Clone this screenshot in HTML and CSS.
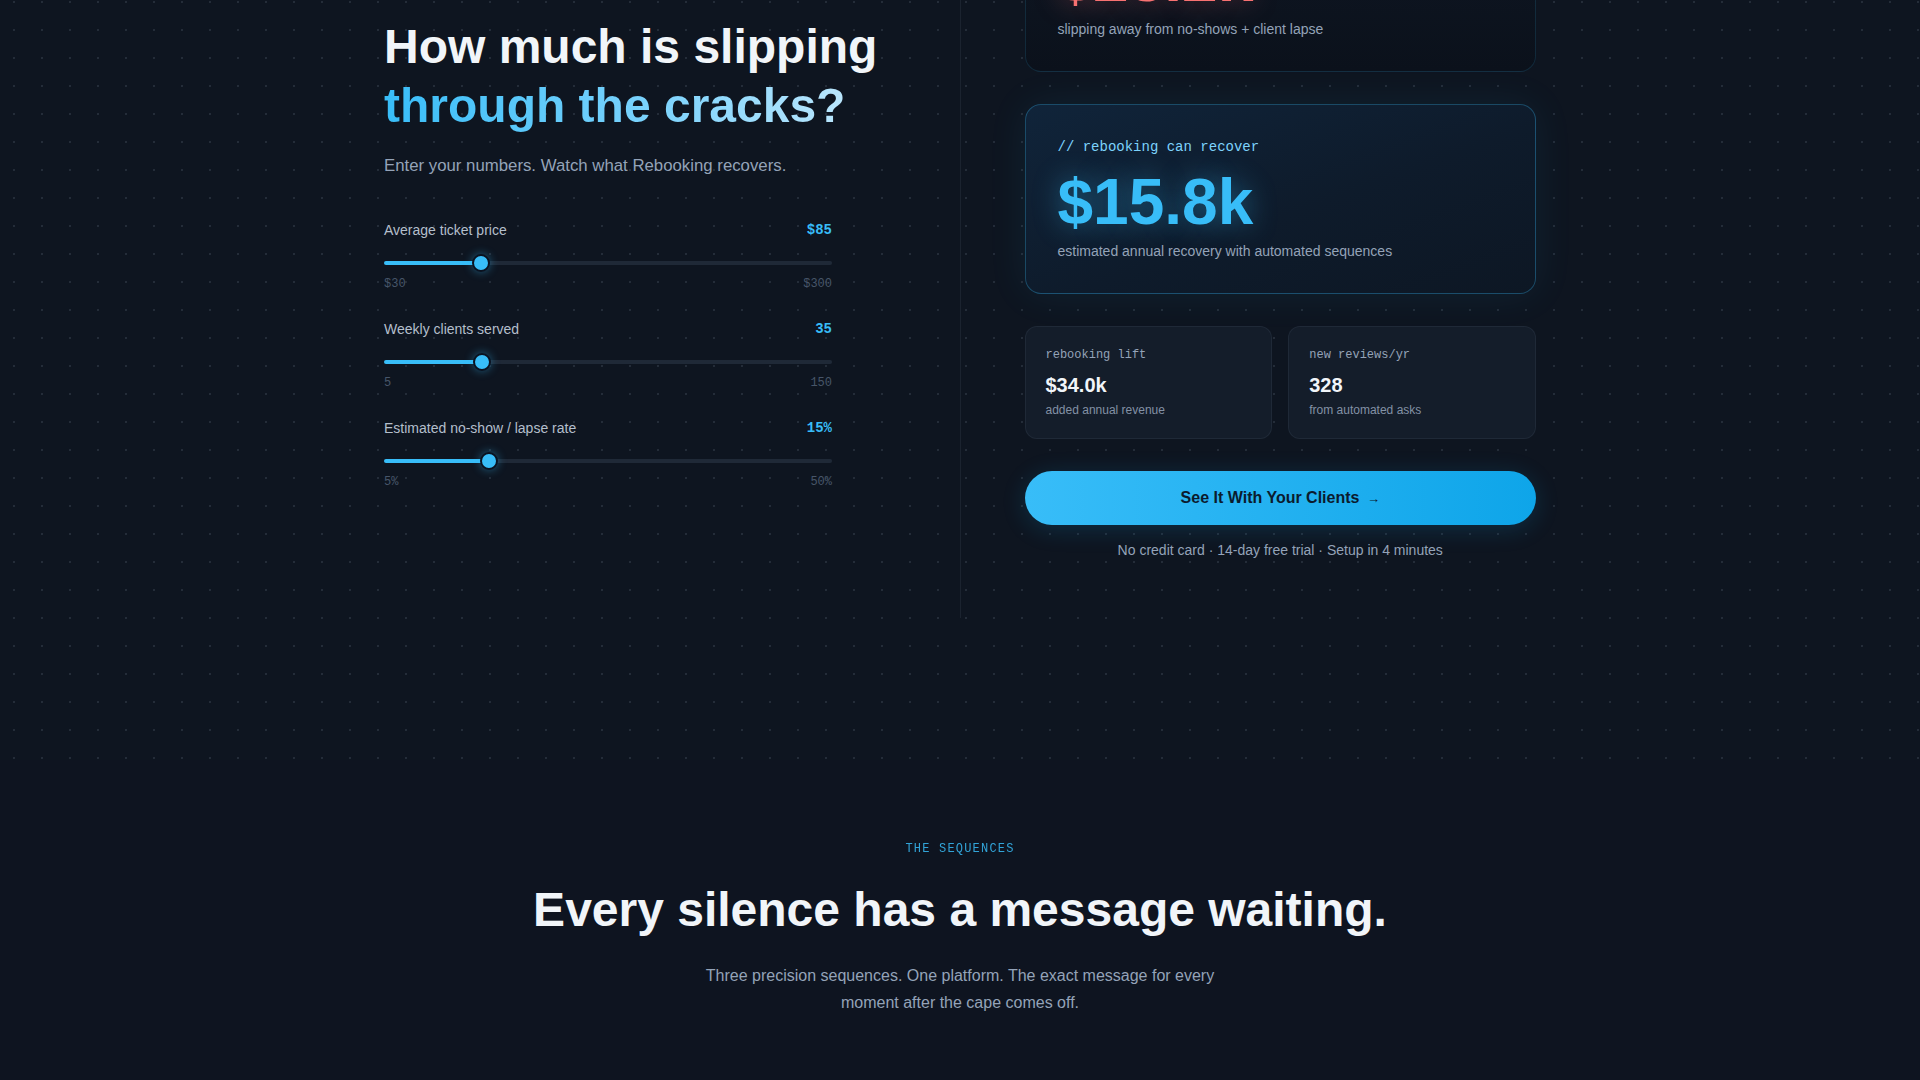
FILE: index.html
```html
<!DOCTYPE html>
<html lang="en">
<head>
  <meta charset="UTF-8">
  <title>Rebooking — ROI calculator</title>
  <meta name="viewport" content="width=device-width, initial-scale=1.0">
  <link rel="stylesheet" href="styles.css">
</head>
<body>
  <section class="calc">
    <div class="calc-grid">
      <div class="calc-left">
        <h2 class="calc-title">How much is slipping<br><span class="grad">through the cracks?</span></h2>
        <p class="calc-sub">Enter your numbers. Watch what Rebooking recovers.</p>
        <div class="sliders">
          <div class="slider">
            <div class="slider-head"><label for="ticket">Average ticket price</label><span class="slider-val">$85</span></div>
            <input class="range" type="range" id="ticket" min="30" max="300" value="85" style="--fill:21.6%">
            <div class="slider-ends"><span>$30</span><span>$300</span></div>
          </div>
          <div class="slider">
            <div class="slider-head"><label for="clients">Weekly clients served</label><span class="slider-val">35</span></div>
            <input class="range" type="range" id="clients" min="5" max="150" value="35" style="--fill:21.9%">
            <div class="slider-ends"><span>5</span><span>150</span></div>
          </div>
          <div class="slider">
            <div class="slider-head"><label for="lapse">Estimated no-show / lapse rate</label><span class="slider-val">15%</span></div>
            <input class="range" type="range" id="lapse" min="5" max="50" value="15" style="--fill:23.3%">
            <div class="slider-ends"><span>5%</span><span>50%</span></div>
          </div>
        </div>
      </div>
      <div class="calc-divider"></div>
      <div class="calc-right">
        <div class="big-card loss">
          <div class="card-tag">// you're losing every year</div>
          <div class="big-num">$23.2k</div>
          <div class="card-note">slipping away from no-shows + client lapse</div>
        </div>
        <div class="big-card win">
          <div class="card-tag">// rebooking can recover</div>
          <div class="big-num">$15.8k</div>
          <div class="card-note">estimated annual recovery with automated sequences</div>
        </div>
        <div class="mini-cards">
          <div class="mini-card">
            <div class="mini-tag">rebooking lift</div>
            <div class="mini-num">$34.0k</div>
            <div class="mini-note">added annual revenue</div>
          </div>
          <div class="mini-card">
            <div class="mini-tag">new reviews/yr</div>
            <div class="mini-num">328</div>
            <div class="mini-note">from automated asks</div>
          </div>
        </div>
        <button class="cta" type="button">See It With Your Clients <span class="arrow">→</span></button>
        <p class="cta-note">No credit card · 14-day free trial · Setup in 4 minutes</p>
      </div>
    </div>
  </section>

  <section class="seq">
    <div class="eyebrow">THE SEQUENCES</div>
    <h2 class="seq-title">Every silence has a message waiting.</h2>
    <p class="seq-sub">Three precision sequences. One platform. The exact message for every moment after the cape comes off.</p>
  </section>
</body>
</html>
```

FILE: styles.css
```css
html, body {
  margin: 0; padding: 0;
  background: #0e1420;
  font-family: "Liberation Sans", Arial, sans-serif;
  color: #f1f5f9;
  overflow-x: hidden;
}
* { box-sizing: border-box; }

/* calculator block, dotted backdrop */
.calc {
  margin-top: -119px;
  padding-bottom: 142px;
  background-color: #0e1520;
  background-image: radial-gradient(circle, rgba(148,163,184,0.16) 1px, transparent 1.5px);
  background-size: 28px 28px;
  background-position: 0 23px;
}
.calc-grid {
  max-width: 1152px;
  margin: 0 auto;
  display: grid;
  grid-template-columns: 1fr 1px 1fr;
  gap: 64px;
}
.calc-left { padding-top: 137px; }
.calc-divider { background: rgba(148,163,184,0.1); }
.calc-right { padding-bottom: 58px; }

.calc-title {
  margin: 0;
  font-size: 48px;
  line-height: 1.22;
  font-weight: 700;
  color: #f1f5f9;
}
.grad {
  background: linear-gradient(90deg, #38bdf8 0%, #7dd3fc 60%, #bae6fd 100%);
  -webkit-background-clip: text;
  background-clip: text;
  color: transparent;
}
.calc-sub {
  margin: 17px 0 0;
  font-size: 16.8px;
  line-height: 27px;
  color: #94a3b8;
}

/* sliders */
.sliders { max-width: 448px; margin-top: 41px; }
.slider + .slider { margin-top: 27px; }
.slider-head {
  display: flex; justify-content: space-between; align-items: center;
  height: 20px;
  font-size: 14px;
  color: #b4bfcc;
}
.slider-val {
  font-family: "Liberation Mono", "DejaVu Sans Mono", monospace;
  font-weight: 700;
  color: #38bdf8;
}
.range {
  -webkit-appearance: none;
  appearance: none;
  display: block;
  width: 100%;
  height: 18px;
  margin: 14px 0 0;
  background: transparent;
  outline: none;
}
.range::-webkit-slider-runnable-track {
  height: 4px;
  border-radius: 2px;
  background: linear-gradient(90deg, #38bdf8 0, #38bdf8 var(--fill), #1f2937 var(--fill));
}
.range::-webkit-slider-thumb {
  -webkit-appearance: none;
  width: 18px; height: 18px;
  margin-top: -7px;
  border-radius: 50%;
  background: #38bdf8;
  border: 2px solid #0b1220;
  box-shadow: 0 0 10px rgba(56,189,248,0.45);
}
.slider-ends {
  display: flex; justify-content: space-between;
  margin-top: 4px;
  font-family: "Liberation Mono", "DejaVu Sans Mono", monospace;
  font-size: 12px;
  line-height: 16px;
  color: #475569;
}

/* result cards */
.big-card {
  border-radius: 16px;
  padding: 32px 32px 32px;
  border: 1px solid rgba(56,189,248,0.14);
}
.big-card.loss {
  background: linear-gradient(180deg, #0f1825 0%, #0b111b 100%);
  margin-bottom: 32px;
}
.big-card.win {
  background: linear-gradient(160deg, #10243a 0%, #0e1b2b 55%, #0d1724 100%);
  border-color: rgba(56,189,248,0.3);
  box-shadow: 0 0 40px rgba(56,189,248,0.08);
}
.card-tag {
  font-family: "Liberation Mono", "DejaVu Sans Mono", monospace;
  font-size: 14px;
  line-height: 20px;
  color: #7dd3fc;
}
.loss .card-tag { color: #fca5a5; }
.big-num {
  margin-top: 13px;
  font-size: 64px;
  line-height: 64px;
  font-weight: 700;
  color: #38bdf8;
  text-shadow: 0 0 28px rgba(56,189,248,0.45);
}
.loss .big-num {
  color: #f87171;
  text-shadow: 0 0 28px rgba(248,113,113,0.35);
}
.card-note {
  margin-top: 7px;
  font-size: 14px;
  line-height: 20px;
  color: #94a3b8;
}
.loss .card-note { margin-top: 8px; }

.mini-cards {
  display: grid;
  grid-template-columns: 1fr 1fr;
  gap: 16px;
  margin-top: 32px;
}
.mini-card {
  padding: 20px;
  border-radius: 12px;
  background: #141d2a;
  border: 1px solid rgba(148,163,184,0.09);
}
.mini-tag {
  font-family: "Liberation Mono", "DejaVu Sans Mono", monospace;
  font-size: 12px;
  line-height: 16px;
  color: #94a3b8;
}
.mini-num {
  margin-top: 10px;
  font-size: 20px;
  line-height: 24px;
  font-weight: 700;
  color: #f1f5f9;
}
.mini-note {
  margin-top: 5px;
  font-size: 12px;
  line-height: 16px;
  color: #8391a5;
}

.cta {
  display: block;
  width: 100%;
  margin-top: 32px;
  padding: 16px 0;
  border: none;
  border-radius: 999px;
  background: linear-gradient(90deg, #38bdf8 0%, #0ea5e9 100%);
  font-family: "Liberation Sans", Arial, sans-serif;
  font-size: 16px;
  line-height: 21px;
  font-weight: 700;
  color: #0b1b2e;
  cursor: pointer;
  box-shadow: 0 4px 24px rgba(14,165,233,0.18);
}
.cta .arrow { font-size: 13px; margin-left: 3px; }
.cta-note {
  margin: 15px 0 0;
  text-align: center;
  font-size: 14px;
  line-height: 20px;
  color: #94a3b8;
}

/* sequences intro */
.seq {
  padding: 81px 24px 120px;
  text-align: center;
  background: #0e1420;
}
.eyebrow {
  font-family: "Liberation Mono", "DejaVu Sans Mono", monospace;
  font-size: 12px;
  line-height: 16px;
  letter-spacing: 0.1em;
  color: #38bdf8;
  opacity: 0.85;
}
.seq-title {
  margin: 24px 0 0;
  font-size: 48px;
  line-height: 1.2;
  font-weight: 700;
  color: #f1f5f9;
}
.seq-sub {
  max-width: 520px;
  margin: 23px auto 0;
  font-size: 16px;
  line-height: 27px;
  color: #94a3b8;
}
```
